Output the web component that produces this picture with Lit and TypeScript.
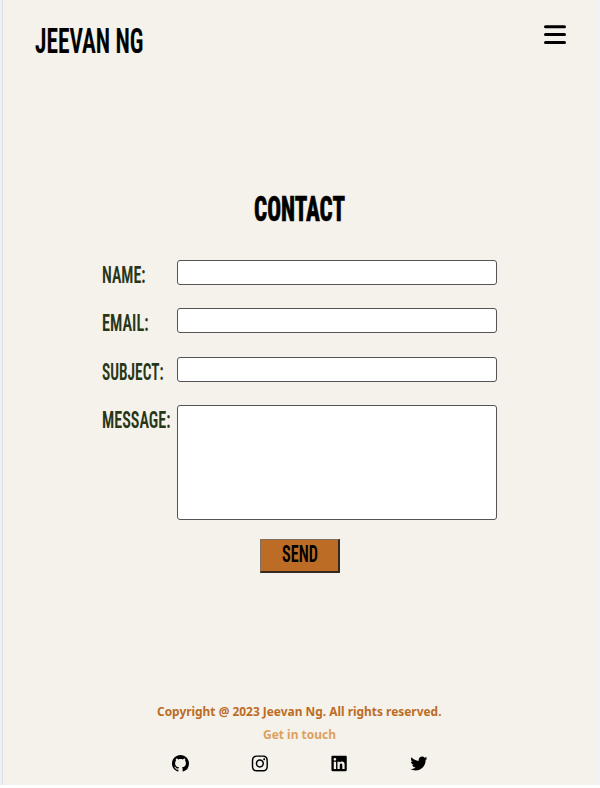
import { LitElement, html, css, svg } from "lit";
import { customElement } from "lit/decorators.js";

const fitted = (text: string, width: number, height: number, baseline: number, cls: string) => html`
  <svg class="fit ${cls}" width=${width} height=${height}>
    ${svg`<text x="0" y=${baseline} textLength=${width} lengthAdjust="spacingAndGlyphs">${text}</text>`}
  </svg>`;

const icons = [
  { name: "GitHub", d: "M8 0C3.58 0 0 3.58 0 8c0 3.54 2.29 6.53 5.47 7.59.4.07.55-.17.55-.38 0-.19-.01-.82-.01-1.49-2.01.37-2.53-.49-2.69-.94-.09-.23-.48-.94-.82-1.13-.28-.15-.68-.52-.01-.53.63-.01 1.08.58 1.23.82.72 1.21 1.87.87 2.33.66.07-.52.28-.87.51-1.07-1.78-.2-3.64-.89-3.64-3.95 0-.87.31-1.59.82-2.15-.08-.2-.36-1.02.08-2.12 0 0 .67-.21 2.2.82.64-.18 1.32-.27 2-.27s1.36.09 2 .27c1.53-1.04 2.2-.82 2.2-.82.44 1.1.16 1.92.08 2.12.51.56.82 1.27.82 2.15 0 3.07-1.87 3.75-3.65 3.95.29.25.54.73.54 1.48 0 1.07-.01 1.93-.01 2.2 0 .21.15.46.55.38A8.01 8.01 0 0 0 16 8c0-4.42-3.58-8-8-8z", box: "0 0 16 16" },
  { name: "Instagram", d: "M224.1 141c-63.6 0-114.9 51.3-114.9 114.9s51.3 114.9 114.9 114.9S339 319.5 339 255.900 287.7 141 224.1 141zm0 189.600c-41.100 0-74.700-33.500-74.700-74.700s33.500-74.700 74.700-74.700 74.700 33.500 74.700 74.700-33.600 74.700-74.700 74.700zm146.400-194.300c0 14.900-12 26.800-26.800 26.800-14.900 0-26.800-12-26.800-26.800s12-26.800 26.800-26.800 26.800 12 26.800 26.800zm76.100 27.200c-1.700-35.900-9.900-67.700-36.200-93.900-26.200-26.200-58-34.400-93.900-36.200-37-2.100-147.900-2.100-184.900 0-35.800 1.700-67.600 9.900-93.900 36.100s-34.400 58-36.200 93.900c-2.100 37-2.100 147.900 0 184.900 1.700 35.900 9.900 67.700 36.200 93.900s58 34.400 93.900 36.200c37 2.100 147.900 2.100 184.900 0 35.900-1.700 67.700-9.900 93.900-36.200 26.200-26.200 34.400-58 36.200-93.900 2.100-37 2.100-147.800 0-184.800zM398.800 388c-7.800 19.600-22.900 34.700-42.600 42.600-29.500 11.700-99.500 9-132.100 9s-102.700 2.600-132.100-9c-19.600-7.800-34.700-22.900-42.600-42.600-11.700-29.500-9-99.500-9-132.100s-2.600-102.700 9-132.100c7.800-19.600 22.900-34.700 42.600-42.600 29.500-11.700 99.500-9 132.100-9s102.700-2.600 132.100 9c19.600 7.800 34.700 22.900 42.600 42.600 11.700 29.500 9 99.500 9 132.100s2.700 102.700-9 132.100z", box: "-22 20 472 472" },
  { name: "LinkedIn", d: "M416 32H31.900C14.300 32 0 46.500 0 64.300v383.400C0 465.500 14.300 480 31.900 480H416c17.600 0 32-14.500 32-32.300V64.300c0-17.800-14.400-32.300-32-32.300zM135.400 416H69V202.200h66.500V416zm-33.200-243c-21.300 0-38.500-17.300-38.500-38.500S80.900 96 102.200 96c21.200 0 38.500 17.300 38.500 38.500 0 21.300-17.200 38.500-38.500 38.500zm282.100 243h-66.400V312c0-24.800-.5-56.700-34.500-56.700-34.600 0-39.900 27-39.900 54.900V416h-66.400V202.200h63.700v29.200h.9c8.900-16.800 30.600-34.500 62.900-34.500 67.200 0 79.700 44.300 79.700 101.900V416z", box: "-12 8 496 496" },
  { name: "Twitter", d: "M459.370 151.716c.325 4.548.325 9.097.325 13.645 0 138.720-105.583 298.558-298.558 298.558-59.452 0-114.680-17.219-161.137-47.106 8.447.974 16.568 1.299 25.340 1.299 49.055 0 94.213-16.568 130.274-44.832-46.132-.975-84.792-31.188-98.112-72.772 6.498.974 12.995 1.624 19.818 1.624 9.421 0 18.843-1.300 27.614-3.573-48.081-9.747-84.143-51.980-84.143-102.985v-1.299c13.969 7.797 30.214 12.670 47.431 13.319-28.264-18.843-46.781-51.005-46.781-87.391 0-19.492 5.197-37.360 14.294-52.954 51.655 63.675 129.300 105.258 216.365 109.807-1.624-7.797-2.599-15.918-2.599-24.040 0-57.828 46.782-104.934 104.934-104.934 30.213 0 57.502 12.670 76.670 33.137 23.715-4.548 46.456-13.320 66.599-25.340-7.798 24.366-24.366 44.833-46.132 57.827 21.117-2.273 41.584-8.122 60.426-16.243-14.292 20.791-32.161 39.308-52.628 54.253z", box: "-10 0 512 512" },
];

@customElement("app-root")
export class AppRoot extends LitElement {
  static styles = css`
    :host { display: block; height: 788px; background: #fff; overflow: hidden; }
    * { box-sizing: border-box; }
    .frame { height: 785px; display: flex; background: #f2f2f2; }
    .edge { width: 3px; background: #eff1f4; border-right: 1px solid #dcdfe4; }
    .page { width: 592px; background: #f5f2eb; display: flex; flex-direction: column; }
    svg { display: block; }
    .fit { overflow: visible; font-family: Roboto, "Liberation Sans Narrow", sans-serif; font-stretch: 75%; }
    header { height: 195px; padding: 24px 29px 0 31.500px; display: flex; justify-content: space-between; }
    .logo { font-size: 34.500px; font-weight: 600; stroke: #000; stroke-width: .2px; }
    .menu { width: 22px; height: 19px; margin-top: 1px; }
    main { height: 509px; display: flex; flex-direction: column; align-items: center; }
    .title { font-size: 34.500px; font-weight: 800; stroke: #000; stroke-width: .6px; }
    form { width: 395px; margin: 39px 0 0 1px; display: flex; flex-direction: column; align-items: center; }
    .row { width: 100%; display: flex; justify-content: space-between; align-items: flex-start; margin-bottom: 23.300px; }
    .label { font-size: 23px; font-weight: 600; fill: #283618; }
    input, textarea { width: 320px; height: 25px; margin: 0; padding: 2px; border: 1px solid #545454; border-radius: 3px; background: #fff; resize: none; display: block; outline: none; }
    textarea { height: 115.500px; }
    .last { margin-bottom: 18.600px; }
    button { width: 80px; height: 34px; margin-left: 1px; padding: 0; border-style: solid; border-width: 1px 2px 2px 1px; border-color: #80705f #35281c #35281c #80705f; background: #bc6c25; display: flex; justify-content: center; align-items: flex-start; }
    .send { font-size: 23px; font-weight: 600; }
    footer { display: flex; flex-direction: column; align-items: center; }
    .copy, .touch { font-family: "Noto Sans", "Open Sans", sans-serif; font-stretch: 100%; font-size: 11.800px; font-weight: 700; fill: #bc6c25; }
    .touch { fill: #dda15e; margin-top: 3px; font-size: 12px; }
    nav { display: flex; width: 256px; margin: 12px 0 0 1px; justify-content: space-between; }
    nav svg { width: 17px; height: 17px; }
  `;

  private row(label: string, width: number) {
    return html`<label class="row">${fitted(label, width, 25, 22.700, "label")}<input type="text" /></label>`;
  }

  render() {
    return html`
      <div class="frame">
        <div class="edge"></div>
        <div class="page">
          <header>
            ${fitted("JEEVAN NG", 108.500, 34, 29.300, "logo")}
            <svg class="menu" viewBox="0 0 22 19">
              <path d="M1.500 1.700h19M1.500 9.500h19M1.500 17.500h19" stroke="#000" stroke-width="3" stroke-linecap="round" />
            </svg>
          </header>
          <main>
            ${fitted("CONTACT", 91, 26, 25.700, "title")}
            <form>
              ${this.row("NAME:", 43.500)}
              ${this.row("EMAIL:", 46.500)}
              ${this.row("SUBJECT:", 61.500)}
              <label class="row last">${fitted("MESSAGE:", 68.500, 25, 22.700, "label")}<textarea></textarea></label>
              <button type="button">${fitted("SEND", 36, 24, 22.300, "send")}</button>
            </form>
          </main>
          <footer>
            ${fitted("Copyright @ 2023 Jeevan Ng. All rights reserved.", 284.500, 20, 12.300, "copy")}
            ${fitted("Get in touch", 73, 16, 12, "touch")}
            <nav>
              ${icons.map((i) => html`<svg viewBox=${i.box} role="img" aria-label=${i.name}><path d=${i.d} /></svg>`)}
            </nav>
          </footer>
        </div>
      </div>`;
  }
}
